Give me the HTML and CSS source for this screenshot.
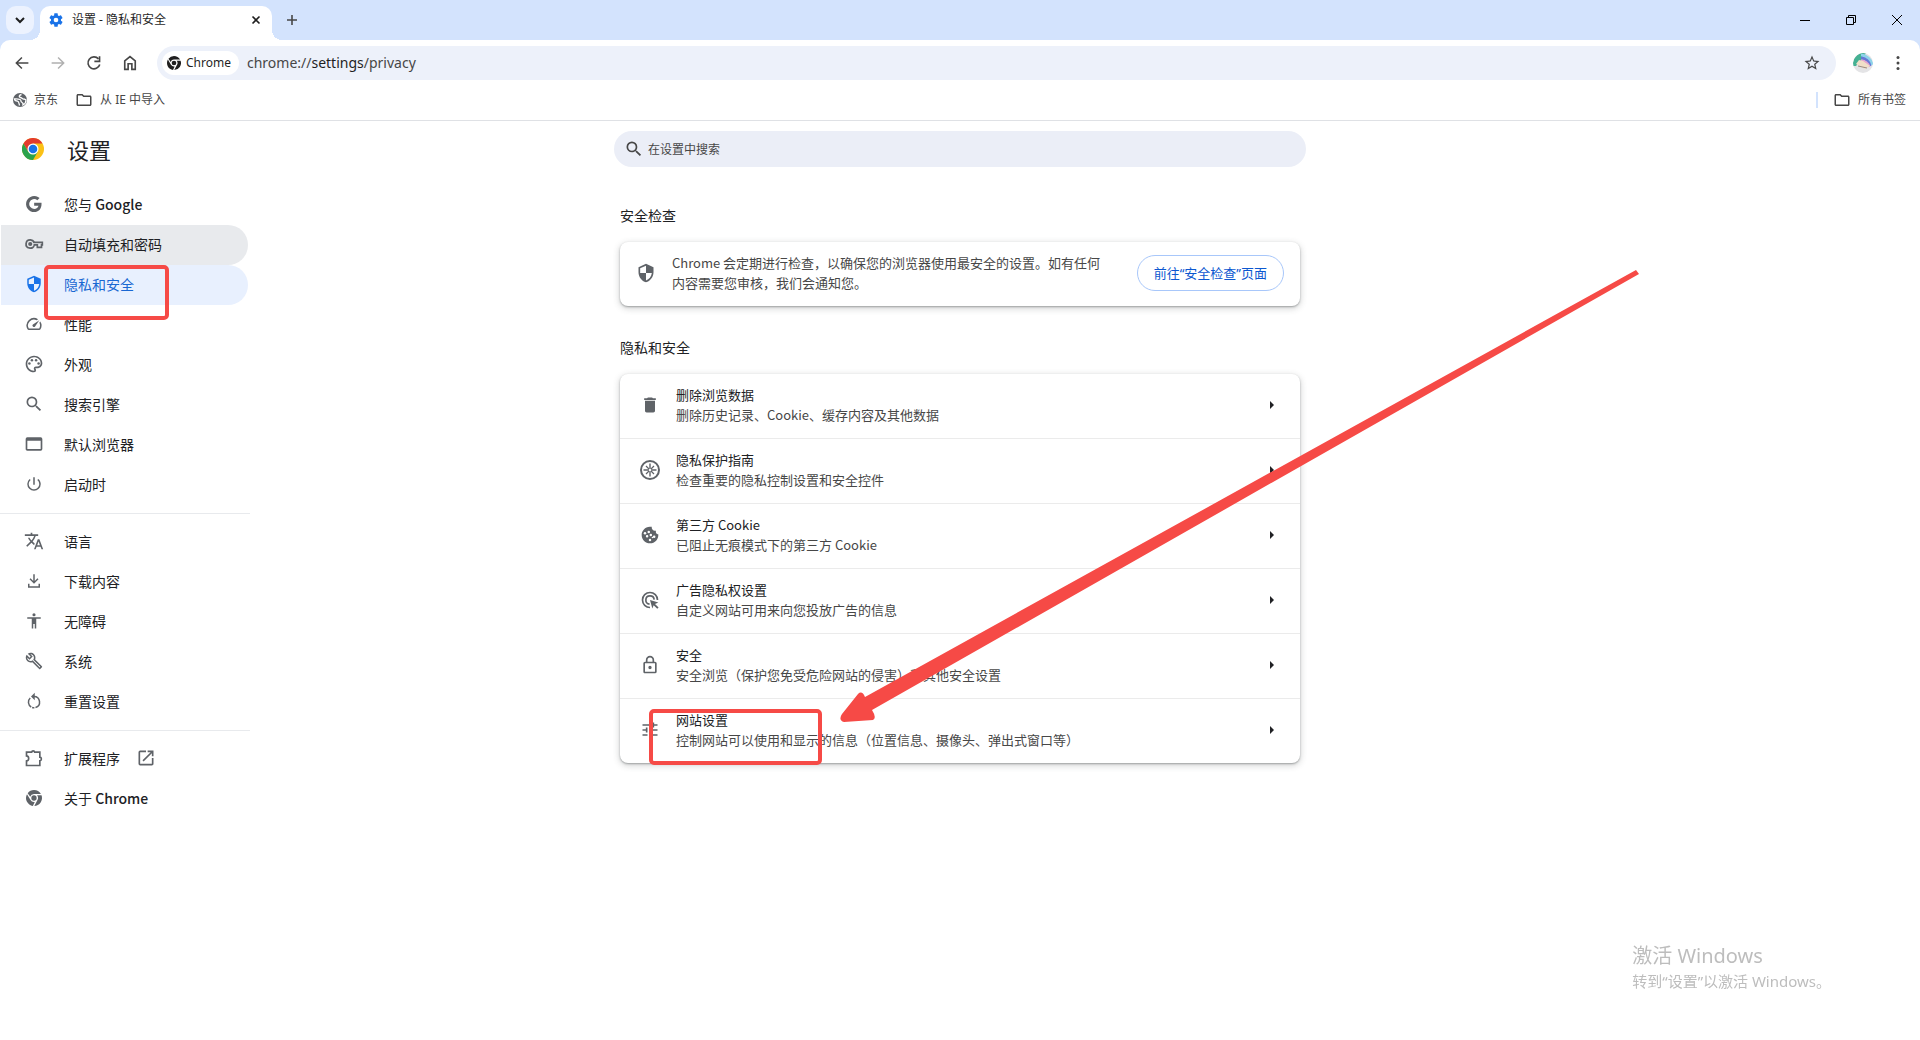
FILE: index.html
```html
<!DOCTYPE html>
<html lang="zh-CN">
<head>
<meta charset="utf-8">
<title>设置 - 隐私和安全</title>
<link rel="stylesheet" href="styles.css">
</head>
<body>
<svg class="defs" aria-hidden="true">
  <symbol id="i-chrome" viewBox="0 0 24 24">
    <path fill-rule="evenodd" d="M12 0a12 12 0 0 1 10.400 6H12a6 6 0 0 0-5.700 4.100L2.500 4.700A12 12 0 0 1 12 0zM1.500 6.200 6.800 15a6 6 0 0 0 6.300 2.900L10.300 23.900A12 12 0 0 1 1.500 6.200zM16.500 8h6.800a12 12 0 0 1-10.800 16l4.700-9a6 6 0 0 0-.7-7z"/><circle cx="12" cy="12" r="4"/>
  </symbol>
  <symbol id="i-folder" viewBox="0 0 24 24"><path d="M9.170 6l2 2H20v10H4V6h5.170M10 4H4c-1.100 0-1.990.9-1.990 2L2 18c0 1.100.9 2 2 2h16c1.100 0 2-.9 2-2V8c0-1.100-.9-2-2-2h-8l-2-2z"/></symbol>
  <symbol id="i-shield" viewBox="0 0 24 24"><path d="M12 1 3 5v6c0 5.550 3.840 10.740 9 12 5.160-1.260 9-6.450 9-12V5l-9-4zm0 10.990h7c-.53 4.120-3.280 7.790-7 8.940V12H5V6.300l7-3.110v8.800z"/></symbol>
  <symbol id="i-search" viewBox="0 0 24 24"><path d="M15.500 14h-.79l-.28-.27A6.470 6.470 0 0 0 16 9.500 6.500 6.500 0 1 0 9.500 16c1.610 0 3.090-.59 4.230-1.570l.27.28v.79l5 4.990L20.490 19l-4.990-5zm-6 0C7.010 14 5 11.990 5 9.500S7.010 5 9.500 5 14 7.010 14 9.500 11.990 14 9.500 14z"/></symbol>
</svg>

<header class="browser">
  <div class="tabstrip">
    <button class="tab-search" aria-label="搜索标签页"><svg viewBox="0 0 12 12" width="12" height="12"><path d="M2 4l4 4 4-4" fill="none" stroke="#1f1f1f" stroke-width="2"/></svg></button>
    <div class="tab">
      <svg class="gear" viewBox="0 0 24 24" width="16" height="16"><path d="M19.430 12.980c.04-.32.07-.64.07-.98s-.03-.66-.07-.98l2.110-1.650c.19-.15.24-.42.12-.64l-2-3.460c-.12-.22-.39-.3-.61-.22l-2.490 1c-.52-.4-1.080-.73-1.690-.98l-.38-2.650A.49.490 0 0 0 14 2h-4c-.25 0-.46.180-.49.420l-.38 2.650c-.61.250-1.170.590-1.690.980l-2.490-1c-.23-.09-.49 0-.61.220l-2 3.460c-.13.220-.07.490.12.640l2.110 1.650c-.04.320-.07.650-.07.980s.03.660.07.980l-2.110 1.650c-.19.150-.24.420-.12.640l2 3.460c.12.220.39.300.61.220l2.490-1c.52.400 1.080.730 1.690.980l.38 2.650c.03.240.24.420.49.420h4c.25 0 .46-.18.49-.42l.38-2.650c.61-.25 1.170-.59 1.690-.98l2.490 1c.23.090.49 0 .61-.22l2-3.460c.12-.22.07-.49-.12-.64l-2.110-1.650zM12 15.500a3.500 3.500 0 1 1 0-7 3.500 3.500 0 0 1 0 7z"/></svg>
      <span class="tab-title">设置 - 隐私和安全</span>
      <button class="plain" aria-label="关闭标签页"><svg viewBox="0 0 16 16" width="16" height="16"><path d="M4.500 4.500l7 7m0-7l-7 7" stroke="#1f1f1f" stroke-width="1.600"/></svg></button>
    </div>
    <button class="plain new-tab" aria-label="新标签页"><svg viewBox="0 0 16 16" width="16" height="16"><path d="M8 3v10M3 8h10" stroke="#474747" stroke-width="1.600"/></svg></button>
    <div class="window-controls">
      <button class="plain" aria-label="最小化"><svg viewBox="0 0 12 12" width="12" height="12"><path d="M1 6.500h10" stroke="#000"/></svg></button>
      <button class="plain" aria-label="还原"><svg viewBox="0 0 12 12" width="12" height="12"><path d="M1.500 3.500h7v7h-7zM3.500 3.500v-2h7v7h-2" fill="none" stroke="#000"/></svg></button>
      <button class="plain" aria-label="关闭"><svg viewBox="0 0 12 12" width="12" height="12"><path d="M1 1l10 10m0-10L1 11" stroke="#000"/></svg></button>
    </div>
  </div>

  <div class="toolbar">
    <button class="plain" aria-label="后退"><svg viewBox="0 0 24 24" width="18" height="18"><path d="M20.500 11H6.800l5.800-5.600L11.200 4 3 12l8.200 8 1.400-1.400L6.800 13h13.700z"/></svg></button>
    <button class="plain dim" aria-label="前进"><svg viewBox="0 0 24 24" width="18" height="18"><path d="M3.500 11h13.700l-5.800-5.600L12.800 4 21 12l-8.200 8-1.400-1.400 5.800-5.600H3.500z"/></svg></button>
    <button class="plain" aria-label="重新加载"><svg viewBox="0 0 24 24" width="18" height="18"><path d="M18 6.500A8 8 0 1 0 19.700 14" fill="none" stroke="#474747" stroke-width="2.200"/><path d="M20.500 3v8h-8V8.800h5.800V3z"/></svg></button>
    <button class="plain" aria-label="主页"><svg viewBox="0 0 24 24" width="18" height="18"><path d="M5 20.500V9.200L12 3.500l7 5.700v11.300h-4.500V13h-5v7.500z" fill="none" stroke="#474747" stroke-width="2.200"/></svg></button>
    <div class="omnibox">
      <button class="chip"><svg width="14" height="14"><use href="#i-chrome"/></svg>Chrome</button>
      <div class="url">chrome://<b>settings</b>/privacy</div>
      <button class="plain" aria-label="为此标签页添加书签"><svg viewBox="0 0 24 24" width="18" height="18"><path d="M22 9.240l-7.190-.62L12 2 9.190 8.630 2 9.240l5.460 4.730L5.820 21 12 17.270 18.180 21l-1.630-7.030L22 9.240zM12 15.400l-3.760 2.270 1-4.280-3.320-2.880 4.380-.38L12 6.100l1.710 4.040 4.380.38-3.320 2.880 1 4.280L12 15.400z"/></svg></button>
    </div>
    <button class="plain avatar" aria-label="您">
      <svg viewBox="0 0 20 20" width="20" height="20"><defs><clipPath id="round"><circle cx="10" cy="10" r="10"/></clipPath></defs>
        <g clip-path="url(#round)"><rect width="20" height="20" fill="#e4e4e6"/><path d="M0 13A12 12 0 0 1 8 0h5l-4 6-6 7z" fill="#45b193"/><path d="M8 2a12 12 0 0 1 11 10" fill="none" stroke="#8ed3ea" stroke-width="3"/><path d="M8 5a10 10 0 0 1 9 8" fill="none" stroke="#6478d6" stroke-width="3"/><path d="M8 8a8 8 0 0 1 8 6" fill="none" stroke="#e3a5cf" stroke-width="3"/><path d="M3 11l3-4 4 1 7 5-5 3z" fill="#f1dfc8"/><path d="M5 13l9 2" stroke="#9a8b83"/></g></svg>
    </button>
    <button class="plain" aria-label="更多"><svg viewBox="0 0 16 16" width="16" height="16"><circle cx="8" cy="2.500" r="1.500"/><circle cx="8" cy="8" r="1.500"/><circle cx="8" cy="13.500" r="1.500"/></svg></button>
  </div>

  <nav class="bookmarks" aria-label="书签栏">
    <a href="#"><svg viewBox="0 0 14 14" width="14" height="14"><circle cx="7" cy="7" r="7" fill="#5f6368"/><path d="M8.500 1.500C6 2 5.500 4 7.500 4.500s2 2 3.500 1.500l2 1c0 2-1 4-3 4.800.5-1.800-.5-2.300-1.500-2.800s0-2-1.500-2.500S4 5.500 1.500 6c0 1.500 1.500 2 3 2.200S6 10.500 6.500 12.500" fill="none" stroke="#fff" stroke-width="1.300"/></svg>京东</a>
    <a href="#"><svg width="18" height="18"><use href="#i-folder"/></svg>从 IE 中导入</a>
    <a href="#" class="all-bookmarks"><svg width="18" height="18"><use href="#i-folder"/></svg>所有书签</a>
  </nav>
</header>

<div class="settings">
  <div class="brand">
    <svg viewBox="0 0 24 24" width="22" height="22"><circle cx="12" cy="12" r="12" fill="#fbc116"/><path d="M1.600 6A12 12 0 0 1 22.400 6H12L6.800 15z" fill="#e33b2e"/><path d="M1.600 6a12 12 0 0 0 10.400 18l5.200-9-5.200 3-5.200-3z" fill="#2ba24c"/><circle cx="12" cy="12" r="6" fill="#fff"/><circle cx="12" cy="12" r="4.700" fill="#1a73e8"/></svg>
    <h1>设置</h1>
  </div>
  <label class="search">
    <svg width="20" height="20"><use href="#i-search"/></svg>
    <input type="search" placeholder="在设置中搜索" aria-label="在设置中搜索">
  </label>

  <nav class="menu" aria-label="设置菜单">
    <a href="#"><svg viewBox="0 0 24 24" width="20" height="20"><path d="M21 10.500h-8.800v3.600h5.200c-.5 2.400-2.500 3.800-5.200 3.800a5.900 5.900 0 1 1 3.800-10.400l2.700-2.700A9.700 9.700 0 1 0 12.200 21.700c5.600 0 9.300-4 8.800-11.200z"/></svg><span>您与 <em>Google</em></span></a>
    <a href="#" class="hovered"><svg viewBox="0 0 24 24" width="20" height="20"><path fill-rule="evenodd" d="M7.500 6a6 6 0 1 0 5.600 8H15v3h7v-3h1V9H13a6 6 0 0 0-5.500-3zm0 2a4 4 0 0 1 3.800 3H21v1h-1v3h-3v-3h-5.500A4 4 0 1 1 7.500 8zm0 1.500a2.500 2.500 0 1 0 0 5 2.500 2.500 0 0 0 0-5z"/></svg>自动填充和密码</a>
    <a href="#" class="current" aria-current="page"><svg width="18" height="18"><use href="#i-shield"/></svg>隐私和安全<i class="mark mark-menu"></i></a>
    <a href="#"><svg viewBox="0 0 24 24" width="18" height="18"><path d="M20.380 8.570l-1.230 1.850a8 8 0 0 1-.22 7.580H5.070A8 8 0 0 1 15.580 6.850l1.850-1.230A10 10 0 0 0 3.350 19a2 2 0 0 0 1.720 1h13.850a2 2 0 0 0 1.740-1 10 10 0 0 0-.27-10.440zm-9.790 6.840a2 2 0 0 0 2.830 0l5.660-8.490-8.490 5.660a2 2 0 0 0 0 2.830z"/></svg>性能</a>
    <a href="#"><svg viewBox="0 0 24 24" width="20" height="20"><path d="M12 22C6.490 22 2 17.510 2 12S6.490 2 12 2s10 4.040 10 9c0 3.310-2.690 6-6 6h-1.770c-.28 0-.5.220-.5.500 0 .12.050.230.130.330.410.470.640 1.060.640 1.670A2.500 2.500 0 0 1 12 22zm0-18c-4.410 0-8 3.590-8 8s3.590 8 8 8c.28 0 .5-.22.5-.5a.54.540 0 0 0-.14-.35c-.41-.46-.63-1.050-.63-1.650a2.500 2.500 0 0 1 2.500-2.500H16c2.210 0 4-1.790 4-4 0-3.860-3.590-7-8-7z"/><circle cx="6.500" cy="11.500" r="1.500"/><circle cx="9.500" cy="7.500" r="1.500"/><circle cx="14.500" cy="7.500" r="1.500"/><circle cx="17.500" cy="11.500" r="1.500"/></svg>外观</a>
    <a href="#"><svg width="20" height="20"><use href="#i-search"/></svg>搜索引擎</a>
    <a href="#"><svg viewBox="0 0 24 24" width="20" height="20"><path d="M20 4H4a2 2 0 0 0-2 2v12c0 1.100.9 2 2 2h16a2 2 0 0 0 2-2V6a2 2 0 0 0-2-2zm0 14H4V8h16z"/></svg>默认浏览器</a>
    <a href="#"><svg viewBox="0 0 24 24" width="18" height="18"><path d="M13 3h-2v10h2V3zm4.830 2.170l-1.420 1.420A6.920 6.920 0 0 1 19 12a7 7 0 1 1-11.420-5.420L6.170 5.170A8.932 8.932 0 0 0 3 12a9 9 0 0 0 18 0c0-2.740-1.230-5.180-3.170-6.830z"/></svg>启动时</a>
    <hr>
    <a href="#"><svg viewBox="0 0 24 24" width="20" height="20"><path d="M12.870 15.070l-2.540-2.510.03-.03A17.520 17.520 0 0 0 14.070 6H17V4h-7V2H8v2H1v1.990h11.170C11.500 7.920 10.440 9.750 9 11.350 8.070 10.320 7.300 9.190 6.690 8h-2c.73 1.630 1.730 3.170 2.980 4.560l-5.090 5.020L4 19l5-5 3.110 3.110.76-2.040zM18.500 10h-2L12 22h2l1.120-3h4.750L21 22h2l-4.500-12zm-2.620 7l1.620-4.330L19.120 17h-3.240z"/></svg>语言</a>
    <a href="#"><svg viewBox="0 0 24 24" width="18" height="18"><path d="M11 3h2v9l3.600-3.600L18 9.800l-6 6-6-6 1.400-1.400L11 12zM4 15.500h2V19h12v-3.500h2V21H4z"/></svg>下载内容</a>
    <a href="#"><svg viewBox="0 0 24 24" width="18" height="18"><path d="M12 1.500a2 2 0 1 1 0 4.200 2 2 0 0 1 0-4.200zM21 9h-6v13h-2v-6h-2v6H9V9H3V7h18v2z"/></svg>无障碍</a>
    <a href="#"><svg viewBox="0 0 24 24" width="18" height="18"><path d="M22.610 18.990l-9.080-9.080c.93-2.340.45-5.100-1.440-7C9.790.610 6.210.400 3.660 2.260L7.500 6.110 6.080 7.520 2.250 3.690C.39 6.230.600 9.820 2.900 12.110c1.860 1.860 4.570 2.350 6.890 1.480l9.110 9.110c.39.390 1.020.390 1.410 0l2.300-2.300c.4-.38.4-1.010 0-1.410zm-3 1.600l-9.460-9.460c-.61.450-1.290.720-2 .82-1.360.2-2.790-.21-3.830-1.250-.95-.94-1.400-2.180-1.380-3.420l3.090 3.090 4.240-4.240-3.090-3.090c1.230-.02 2.480.430 3.410 1.380 1.080 1.080 1.490 2.580 1.240 3.960-.12.710-.42 1.370-.88 1.960l9.450 9.450-.79.800z"/></svg>系统</a>
    <a href="#"><svg viewBox="0 0 24 24" width="18" height="18"><path d="M12 6a7.500 7.500 0 0 1 2 14.700M12.500 21a7.500 7.500 0 0 1-3-.4M8.300 20A7.500 7.500 0 0 1 7 8" fill="none" stroke="#5f6368" stroke-width="2"/><path d="M13 1v10L8 6z"/></svg>重置设置</a>
    <hr>
    <a href="#"><svg viewBox="0 0 24 24" width="20" height="20"><path d="M3 21v-5.500c3.500-.5 3.500-5.500 0-6V5h6.200c.3-2 3.300-2 3.600 0H19v6c2.500.300 2.500 4 0 4.300V21z" fill="none" stroke="#5f6368" stroke-width="2"/></svg>扩展程序<svg class="external" viewBox="0 0 24 24" width="20" height="20"><path d="M19 19H5V5h7V3H5a2 2 0 0 0-2 2v14a2 2 0 0 0 2 2h14c1.100 0 2-.9 2-2v-7h-2v7zM14 3v2h3.590l-9.830 9.830 1.410 1.410L19 6.410V10h2V3h-7z"/></svg></a>
    <a href="#"><svg width="16" height="16"><use href="#i-chrome"/></svg><span>关于 <em>Chrome</em></span></a>
  </nav>

  <main>
    <h2>安全检查</h2>
    <section class="card safety">
      <svg width="20" height="20"><use href="#i-shield"/></svg>
      <p>Chrome 会定期进行检查，以确保您的浏览器使用最安全的设置。如有任何内容需要您审核，我们会通知您。</p>
      <button class="outlined">前往“安全检查”页面</button>
    </section>

    <h2>隐私和安全</h2>
    <section class="card list">
      <a href="#"><svg viewBox="0 0 24 24" width="20" height="20"><path d="M6 19c0 1.100.9 2 2 2h8c1.100 0 2-.9 2-2V7H6v12zM19 4h-3.500l-1-1h-5l-1 1H5v2h14V4z"/></svg><p><strong>删除浏览数据</strong><span>删除历史记录、Cookie、缓存内容及其他数据</span></p></a>
      <a href="#"><svg viewBox="0 0 20 20" width="20" height="20"><g fill="none" stroke="#5f6368"><circle cx="10" cy="10" r="9" stroke-width="2"/><path d="M10 3.500v13M3.500 10h13" stroke-width="1.400"/><path d="M6 6l8 8M14 6l-8 8" stroke-width="1.200"/></g><circle cx="10" cy="10" r="1.200" fill="#fff"/></svg><p><strong>隐私保护指南</strong><span>检查重要的隐私控制设置和安全控件</span></p></a>
      <a href="#"><svg viewBox="0 0 24 24" width="20" height="20"><path d="M21.950 10.990c-1.790-.03-3.700-1.950-2.680-4.220-2.980 1-5.770-1.590-5.190-4.560C6.950.710 2 6.580 2 12c0 5.520 4.480 10 10 10 5.890 0 10.540-5.080 9.950-11.010zM8.500 15a1.500 1.500 0 1 1 0-3 1.500 1.500 0 0 1 0 3zm2-5a1.500 1.500 0 1 1 0-3 1.500 1.500 0 0 1 0 3zm4.500 6c-.55 0-1-.45-1-1s.45-1 1-1 1 .45 1 1-.45 1-1 1z"/><g fill="#fff"><circle cx="6" cy="10" r="1.500"/><circle cx="13" cy="12" r="1.500"/><circle cx="17" cy="14" r="1.500"/><circle cx="12" cy="18" r="1.500"/></g></svg><p><strong>第三方 Cookie</strong><span>已阻止无痕模式下的第三方 Cookie</span></p></a>
      <a href="#"><svg viewBox="0 0 24 24" width="20" height="20"><path d="M12 21A9 9 0 1 1 21 12M11.500 17A5 5 0 1 1 17 11.500" fill="none" stroke="#5f6368" stroke-width="2"/><path d="M12 12l10 3-4 1.700 4.300 4.300-1.600 1.600-4.300-4.300-1.600 4z"/></svg><p><strong>广告隐私权设置</strong><span>自定义网站可用来向您投放广告的信息</span></p></a>
      <a href="#"><svg viewBox="0 0 24 24" width="20" height="20"><path d="M18 8h-1V6A5 5 0 0 0 7 6v2H6a2 2 0 0 0-2 2v10c0 1.100.9 2 2 2h12a2 2 0 0 0 2-2V10a2 2 0 0 0-2-2zM9 6a3 3 0 0 1 6 0v2H9zm9 14H6V10h12zm-6-3a2 2 0 1 0 0-4 2 2 0 0 0 0 4z"/></svg><p><strong>安全</strong><span>安全浏览（保护您免受危险网站的侵害）和其他安全设置</span></p></a>
      <a href="#"><svg viewBox="0 0 24 24" width="20" height="20"><path d="M3 17v2h6v-2H3zM3 5v2h10V5H3zm10 16v-2h8v-2h-8v-2h-2v6h2zM7 9v2H3v2h4v2h2V9H7zm14 4v-2H11v2h10zm-6-4h2V7h4V5h-4V3h-2v6z"/></svg><p><strong>网站设置</strong><span>控制网站可以使用和显示的信息（位置信息、摄像头、弹出式窗口等）</span></p><i class="mark mark-row"></i></a>
      <svg class="arrow" viewBox="0 0 804 458" width="804" height="458" aria-hidden="true"><path d="M802 4 35 440Q40 448 36 450L7 452Q1 450 5 444L21 424Q25 420 28 427L799 0Z"/></svg>
    </section>
  </main>
</div>

<aside class="watermark"><p>激活 Windows</p><p>转到“设置”以激活 Windows。</p></aside>
</body>
</html>
```
FILE: styles.css
```css
* { box-sizing: border-box; }

body {
  margin: 0;
  min-height: 100vh;
  background: #fff;
  color: #202124;
  font: 13px/20px "Noto Sans CJK SC", sans-serif;
}

.defs { position: absolute; width: 0; height: 0; }

h1, h2, p { margin: 0; font-weight: 400; }
a { color: inherit; text-decoration: none; }
svg { display: block; flex: none; fill: #5f6368; }
em, strong { font-style: normal; font-weight: 400; }
em { font-weight: 500; }

button { font: inherit; cursor: pointer; }
.plain {
  display: grid;
  place-items: center;
  padding: 0;
  border: 0;
  background: none;
}

/* Browser frame */
.browser {
  border-bottom: 1px solid #dfe1e5;
  background: #d3e3fd;
  font-family: "Noto Sans", "Noto Sans CJK SC", sans-serif;
}
.browser svg { fill: #474747; }

.tabstrip { display: flex; align-items: center; height: 40px; padding-left: 6px; }
.tab-search {
  display: grid;
  place-items: center;
  width: 28px;
  height: 28px;
  padding: 0;
  border: 0;
  border-radius: 10px;
  background: #ecf2fe;
}
.tab {
  position: relative;
  display: flex;
  align-items: center;
  align-self: flex-end;
  gap: 8px;
  width: 232px;
  height: 34px;
  margin-left: 6px;
  padding: 0 8px 6px;
  border-radius: 10px 10px 0 0;
  background: #fff;
}
.tab::before, .tab::after {
  content: "";
  position: absolute;
  bottom: 0;
  width: 10px;
  height: 10px;
}
.tab::before { right: 100%; background: radial-gradient(circle at 0 0, transparent 10px, #fff 10px); }
.tab::after { left: 100%; background: radial-gradient(circle at 100% 0, transparent 10px, #fff 10px); }
.browser .gear { fill: #1a73e8; }
.tab-title { flex: 1; font-size: 12px; color: #1f1f1f; }
.new-tab { margin-left: 12px; }
.window-controls { display: flex; margin-left: auto; }
.window-controls button { width: 46px; height: 40px; }

.toolbar {
  display: flex;
  align-items: center;
  height: 46px;
  padding: 0 13px;
  border-radius: 10px 10px 0 0;
  background: #fff;
}
.toolbar > .plain { width: 18px; margin-right: 18px; }
.toolbar > .plain:last-child { margin-right: 0; }
.toolbar .dim svg { fill: #b0b0b0; }
.omnibox {
  display: flex;
  flex: 1;
  align-items: center;
  height: 34px;
  margin-right: 17px;
  padding: 0 15px 0 5px;
  border-radius: 17px;
  background: #edf1fa;
}
.chip {
  display: flex;
  align-items: center;
  gap: 5px;
  height: 24px;
  padding: 0 8px 0 5px;
  border: 0;
  border-radius: 12px;
  background: #fff;
  color: #1f1f1f;
  font-size: 12px;
}
.chip svg { fill: #1f1f1f; }
.url { flex: 1; margin-left: 8px; color: #474747; font-size: 14px; }
.url b { color: #1f1f1f; font-weight: 400; }

.bookmarks {
  display: flex;
  align-items: center;
  gap: 17px;
  height: 34px;
  padding: 0 14px 6px 13px;
  background: #fff;
  color: #474747;
  font-size: 12px;
}
.bookmarks a { display: flex; align-items: center; gap: 7px; }
.all-bookmarks { margin-left: auto; }
.all-bookmarks::before { content: ""; width: 2px; height: 16px; margin-right: 8px; background: #d3e3fd; }

/* Settings page */
.settings {
  display: grid;
  grid-template-columns: 250px minmax(0, 1fr) 250px;
  grid-template-rows: 56px auto;
}
.brand { display: flex; align-items: center; gap: 23px; padding-left: 22px; }
.brand h1 { font-size: 22px; line-height: 32px; }

.search {
  display: flex;
  align-items: center;
  align-self: center;
  justify-self: center;
  gap: 4px;
  width: 100%;
  max-width: 692px;
  height: 36px;
  padding: 0 10px;
  border-radius: 18px;
  background: #ebeef7;
}
.search svg { fill: #474747; }
.search input {
  flex: 1;
  padding: 0;
  border: 0;
  outline: 0;
  background: none;
  color: #202124;
  font: inherit;
  font-size: 12px;
}
.search input::placeholder { color: #474747; opacity: 1; }

.menu { grid-column: 1; padding-top: 8px; font-size: 14px; }
.menu a {
  position: relative;
  display: grid;
  grid-template-columns: 20px auto auto;
  justify-content: start;
  justify-items: center;
  align-items: center;
  column-gap: 20px;
  height: 40px;
  margin: 0 2px 0 1px;
  padding: 0 0 2px 23px;
  border-radius: 0 20px 20px 0;
}
.menu hr { height: 1px; margin: 8px 0; border: 0; background: #e8eaed; }
.menu .hovered { background: #e8eaed; }
.menu .current { background: #e8f0fe; color: #1967d2; }
.menu .current svg { fill: #1a73e8; }
.menu .external { margin-left: -4px; }

main {
  justify-self: center;
  width: 100%;
  max-width: 680px;
  padding-top: 28px;
}
h2 { margin-bottom: 17px; font-size: 14px; }

.card {
  position: relative;
  margin-bottom: 31px;
  border-radius: 8px;
  background: #fff;
  box-shadow: 0 1px 2px rgba(60, 64, 67, .4), 0 2px 6px 1px rgba(60, 64, 67, .2);
}
.safety { display: flex; align-items: center; gap: 16px; padding: 11px 16px 13px; color: #474747; }
.safety p { flex: 1; margin-right: 16px; }
.outlined {
  height: 36px;
  padding: 0 16px;
  border: 1px solid #a8c7fa;
  border-radius: 18px;
  background: #fff;
  color: #0b57d0;
  font-family: "Noto Sans", "Noto Sans CJK SC", sans-serif;
}

.list a {
  position: relative;
  display: flex;
  align-items: center;
  gap: 16px;
  min-height: 64px;
  padding: 0 26px 2px 20px;
}
.list a + a { min-height: 65px; border-top: 1px solid #ebebeb; }
.list p { display: grid; flex: 1; }
.list span { color: #474747; }
.list a::after {
  content: "";
  border: solid transparent;
  border-width: 4px 0 4px 4px;
  border-left-color: #202124;
}

/* Red annotations over the page */
.mark { position: absolute; border: 4px solid #f64a46; border-radius: 5px; }
.mark-menu { top: 0; left: 43px; width: 125px; height: 55px; z-index: 1; }
.mark-row { top: 10px; left: 29px; width: 173px; height: 56px; }
.arrow { position: absolute; left: 217px; bottom: 35px; fill: #f64a46; pointer-events: none; }

.watermark {
  position: fixed;
  right: 89px;
  bottom: 48px;
  color: #bdbdbd;
  font: 15px/22px "Noto Sans", "Noto Sans CJK SC", sans-serif;
}
.watermark p:first-child { font-size: 20px; line-height: 28px; }
```
